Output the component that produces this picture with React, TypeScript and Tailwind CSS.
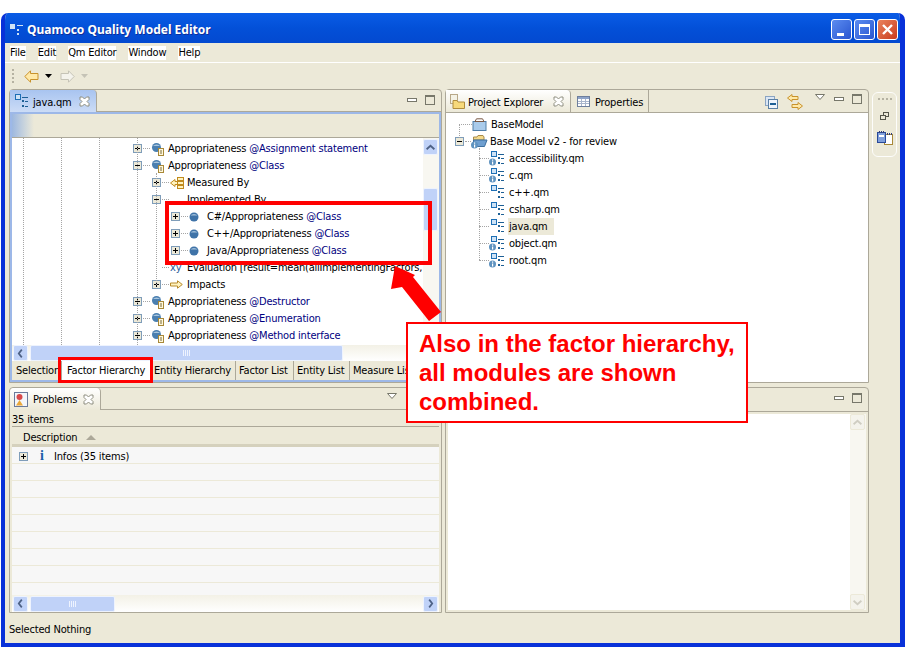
import type { ReactNode } from "react";

/* ------------------------------------------------------------------ */
/*  Icons                                                              */
/* ------------------------------------------------------------------ */

function Expander({ open }: { open?: boolean }) {
  return (
    <svg width="9" height="9" viewBox="0 0 9 9" className="shrink-0" shapeRendering="crispEdges">
      <rect x="0.5" y="0.5" width="8" height="8" fill="#ece9d8" stroke="#7f9db9" />
      <rect x="2" y="4" width="5" height="1" fill="#000" />
      {!open && <rect x="4" y="2" width="1" height="5" fill="#000" />}
    </svg>
  );
}

function FactorIcon() {
  return (
    <svg width="14" height="14" viewBox="0 0 14 14" className="shrink-0">
      <circle cx="5.5" cy="5.5" r="4.5" fill="#4a7fb0" />
      <path d="M2 4 A4 3 0 0 1 9 4 Z" fill="#a9c6de" />
      <rect x="7.5" y="6.5" width="5" height="7" fill="#fff8dc" stroke="#a88838" />
      <path d="M9 9h2M9 11h2" stroke="#7a6a3a" />
    </svg>
  );
}

function BallIcon() {
  return (
    <svg width="10" height="10" viewBox="0 0 10 10" className="shrink-0">
      <circle cx="5" cy="5" r="4.5" fill="#3f73a8" />
      <path d="M1.5 3.5 A4 3 0 0 1 8.5 3.5 Z" fill="#a4c2dc" />
    </svg>
  );
}

function MeasuredIcon() {
  return (
    <svg width="14" height="12" viewBox="0 0 14 12" className="shrink-0" fill="#fff3c0" stroke="#c08a1e">
      <path d="M0.5 6 L5 2.5 V4.5 H8 V7.5 H5 V9.5 Z" />
      <rect x="7.5" y="0.5" width="6" height="3" />
      <rect x="7.5" y="4.5" width="6" height="3" />
      <rect x="7.5" y="8.5" width="6" height="3" />
    </svg>
  );
}

function ImpactArrow() {
  return (
    <svg width="13" height="9" viewBox="0 0 13 9" className="shrink-0">
      <path d="M0.5 3 H7.5 V0.8 L12.3 4.5 L7.5 8.2 V6 H0.5 Z" fill="#fff3c0" stroke="#b88a2a" />
    </svg>
  );
}

function FileIcon({ info }: { info?: boolean }) {
  return (
    <svg width="16" height="15" viewBox="0 0 16 15" className="shrink-0" shapeRendering="crispEdges">
      <rect x="2.5" y="0.5" width="5" height="5" fill="#cfe3f6" stroke="#1d6fb5" />
      <rect x="9" y="3" width="6" height="1" fill="#1d5f95" />
      <rect x="9" y="6" width="2" height="2" fill="#1d5f95" />
      <rect x="12" y="7" width="3" height="1" fill="#1d5f95" />
      <rect x="9" y="11" width="2" height="2" fill="#1d5f95" />
      <rect x="12" y="12" width="3" height="1" fill="#1d5f95" />
      {info && (
        <g shapeRendering="auto">
          <circle cx="3.5" cy="11" r="3.5" fill="#5f93c0" />
          <rect x="3" y="8.5" width="1.2" height="1.2" fill="#fff" />
          <rect x="3" y="10.5" width="1.2" height="3" fill="#fff" />
        </g>
      )}
    </svg>
  );
}

function FolderIcon({ open }: { open?: boolean }) {
  if (open) {
    return (
      <svg width="17" height="15" viewBox="0 0 17 15" className="shrink-0">
        <path d="M2.5 3 H6 L7 1.5 H12 L13 3 V6 H2.5 Z" fill="#f4d98a" stroke="#a68a4a" />
        <path d="M2.5 6 H16 L13.5 12.5 H2.5 Z" fill="#6f9fd0" stroke="#3d6f9e" />
        <circle cx="3.5" cy="11" r="3.5" fill="#5f93c0" />
        <rect x="3" y="8.5" width="1.2" height="1.2" fill="#fff" />
        <rect x="3" y="10.5" width="1.2" height="3" fill="#fff" />
      </svg>
    );
  }
  return (
    <svg width="15" height="13" viewBox="0 0 15 13" className="shrink-0">
      <rect x="1" y="3.5" width="13" height="9" fill="#a9cbeb" stroke="#4f7ea8" />
      <path d="M3 3.5 L4.5 0.8 H10.5 L12 3.5 Z" fill="#fff" stroke="#7b5a46" />
    </svg>
  );
}

function CloseX() {
  return (
    <svg width="11" height="11" viewBox="0 0 11 11" className="shrink-0">
      <path
        d="M1 1 H3.5 L5.5 3 L7.5 1 H10 V3.5 L8 5.5 L10 7.5 V10 H7.5 L5.5 8 L3.5 10 H1 V7.5 L3 5.5 L1 3.5 Z"
        fill="#fff"
        stroke="#8e8e80"
      />
    </svg>
  );
}

function MinMax() {
  return (
    <div className="flex items-start gap-[8px]">
      <div className="mt-[3px] h-[4px] w-[10px] border border-[#77776a] bg-white" />
      <div className="h-[10px] w-[10px] border border-[#77776a] border-t-2 bg-[#ece9d8]" />
    </div>
  );
}

function ChevronMenu() {
  return (
    <svg width="10" height="6" viewBox="0 0 10 6" className="shrink-0">
      <path d="M0.5 0.5 H9.5 L5 5.5 Z" fill="#fff" stroke="#77776a" />
    </svg>
  );
}

function ScrollButton({ dir, disabled }: { dir: "left" | "right" | "up" | "down"; disabled?: boolean }) {
  const d = {
    left: "M9 3 L5.5 7.5 L9 12",
    right: "M6 3 L9.5 7.5 L6 12",
    up: "M3 9.5 L7.5 5.5 L12 9.5",
    down: "M3 5.5 L7.5 9.5 L12 5.5",
  }[dir];
  return (
    <div
      className={
        disabled
          ? "flex h-[16px] w-[15px] shrink-0 items-center justify-center rounded-[2px] border border-[#ece9d8] bg-[#f4f3ec]"
          : "flex h-[16px] w-[15px] shrink-0 items-center justify-center rounded-[2px] border border-[#eef3fe] bg-[#c0d2f8]"
      }
    >
      <svg width="15" height="15" viewBox="0 0 15 15">
        <path d={d} fill="none" stroke={disabled ? "#cfcdc2" : "#4d6185"} strokeWidth="2" />
      </svg>
    </div>
  );
}

function Grip({ horizontal }: { horizontal?: boolean }) {
  return (
    <svg width={horizontal ? 14 : 3} height={horizontal ? 3 : 15} className="shrink-0">
      {[0, 1, 2, 3].map((i) => (
        <rect
          key={i}
          x={horizontal ? i * 4 : 0}
          y={horizontal ? 0 : i * 4}
          width="2"
          height="2"
          fill="#b5b2a2"
        />
      ))}
    </svg>
  );
}

/* ------------------------------------------------------------------ */
/*  Tree rows                                                          */
/* ------------------------------------------------------------------ */

type Row = {
  indent: number;
  state?: "open" | "closed";
  icon?: ReactNode;
  iconWidth: number;
  label: string;
  suffix?: string;
  tight?: boolean;
};

const factor = <FactorIcon />;
const ball = <BallIcon />;

const rows: Row[] = [
  { indent: 121, state: "closed", icon: factor, iconWidth: 17, label: "Appropriateness ", suffix: "@Assignment statement" },
  { indent: 121, state: "open", icon: factor, iconWidth: 17, label: "Appropriateness ", suffix: "@Class" },
  { indent: 140, state: "closed", icon: <MeasuredIcon />, iconWidth: 17, label: "Measured By" },
  { indent: 140, state: "open", iconWidth: 17, label: "Implemented By" },
  { indent: 159, state: "closed", icon: ball, iconWidth: 18, label: "C#/Appropriateness ", suffix: "@Class" },
  { indent: 159, state: "closed", icon: ball, iconWidth: 18, label: "C++/Appropriateness ", suffix: "@Class" },
  { indent: 159, state: "closed", icon: ball, iconWidth: 18, label: "Java/Appropriateness ", suffix: "@Class" },
  {
    indent: 140,
    icon: <span className="text-[11px] text-[#2a5a9a]">xy</span>,
    iconWidth: 17,
    label: "Evaluation [result=mean(allImplementingFactors,",
    tight: true,
  },
  { indent: 140, state: "closed", icon: <ImpactArrow />, iconWidth: 17, label: "Impacts" },
  { indent: 121, state: "closed", icon: factor, iconWidth: 17, label: "Appropriateness ", suffix: "@Destructor" },
  { indent: 121, state: "closed", icon: factor, iconWidth: 17, label: "Appropriateness ", suffix: "@Enumeration" },
  { indent: 121, state: "closed", icon: factor, iconWidth: 17, label: "Appropriateness ", suffix: "@Method interface" },
];

function TreeRow({ row }: { row: Row }) {
  return (
    <div className="flex h-[17px] items-center whitespace-pre" style={{ paddingLeft: row.indent }}>
      <div className="flex w-[18px] shrink-0 items-center">
        {row.state ? <Expander open={row.state === "open"} /> : <div className="w-[9px]" />}
        <div className="ml-[1px] w-[7px] border-t border-dotted border-[#a5a5a5]" />
      </div>
      <div className="flex shrink-0 items-center" style={{ width: row.iconWidth }}>
        {row.icon}
      </div>
      <span className={row.tight ? "tracking-[-0.24px] text-black" : "text-black"}>{row.label}</span>
      {row.suffix && <span className="text-[#000080]">{row.suffix}</span>}
    </div>
  );
}

const files = [
  { name: "accessibility.qm", info: true },
  { name: "c.qm", info: true },
  { name: "c++.qm" },
  { name: "csharp.qm" },
  { name: "java.qm", selected: true },
  { name: "object.qm", info: true },
  { name: "root.qm", info: true },
];

const sheetTabs = ["Selection", "Factor Hierarchy", "Entity Hierarchy", "Factor List", "Entity List", "Measure List"];

const tabWidths: Record<string, string> = {
  Selection: "w-[49px]",
  "Factor Hierarchy": "w-[89px]",
  "Entity Hierarchy": "w-[85px]",
  "Factor List": "w-[58px]",
  "Entity List": "w-[56px]",
  "Measure List": "w-[72px]",
};

/* ------------------------------------------------------------------ */
/*  Page                                                               */
/* ------------------------------------------------------------------ */

export default function App() {
  return (
    <div className="relative h-[649px] w-[906px] overflow-hidden bg-white pl-[1px] pt-[13px] font-['DejaVu_Sans',sans-serif] font-stretch-condensed text-[11px] leading-none tracking-[-0.18px] text-black">
      {/* Window */}
      <div className="flex h-[634px] w-[904px] flex-col overflow-hidden rounded-t-[7px] border-y-0 border-b-[4px] border-l-[4px] border-r-[5px] border-[#0831d9] bg-[#ece9d8]">
        {/* Title bar */}
        <div className="flex h-[30px] shrink-0 items-center bg-gradient-to-b from-[#0a5ce6] via-[#0350d8] to-[#0349d0] pl-[5px] pr-[2px] pt-[3px]">
          <svg width="13" height="12" viewBox="0 0 13 12" shapeRendering="crispEdges" className="shrink-0">
            <rect x="0" y="0" width="5" height="5" fill="#cfe3f6" />
            <rect x="7" y="1" width="6" height="1" fill="#cfe3f6" />
            <rect x="7" y="5" width="2" height="2" fill="#cfe3f6" />
            <rect x="7" y="9" width="2" height="2" fill="#cfe3f6" />
          </svg>
          <span className="ml-[4px] font-['Noto_Sans',sans-serif] text-[12px] font-bold tracking-normal text-white [text-shadow:1px_1px_0_#0f2f9a]">
            Quamoco Quality Model Editor
          </span>
          <div className="ml-auto flex gap-[2px]">
            <div className="flex h-[21px] w-[21px] items-end rounded-[3px] border border-white bg-gradient-to-br from-[#5c8cf0] to-[#2a55d0] pb-[3px] pl-[5px]">
              <div className="h-[3px] w-[7px] bg-white" />
            </div>
            <div className="flex h-[21px] w-[21px] items-center justify-center rounded-[3px] border border-white bg-gradient-to-br from-[#5c8cf0] to-[#2a55d0]">
              <div className="h-[11px] w-[11px] border border-white border-t-[3px]" />
            </div>
            <div className="flex h-[21px] w-[21px] items-center justify-center rounded-[3px] border border-white bg-gradient-to-br from-[#e9825c] to-[#c8391a]">
              <svg width="13" height="13" viewBox="0 0 13 13">
                <path d="M2 2 L11 11 M11 2 L2 11" stroke="#fff" strokeWidth="2.4" />
              </svg>
            </div>
          </div>
        </div>

        {/* Menu bar */}
        <div className="flex h-[19px] shrink-0 items-center pl-[5px] text-[11px]">
          {["File", "Edit", "Qm Editor", "Window", "Help"].map((item) => (
            <span key={item} className="mr-[12px] bg-white py-[1px] leading-[12px]">
              {item}
            </span>
          ))}
        </div>
        <div className="h-[1px] shrink-0 bg-white" />

        {/* Toolbar */}
        <div className="flex h-[26px] shrink-0 items-center pl-[7px]">
          <Grip />
          <svg width="15" height="13" viewBox="0 0 15 13" className="ml-[9px] shrink-0">
            <path d="M0.8 6.5 L6.5 0.8 V3.5 H14 V9.5 H6.5 V12.2 Z" fill="#ffe9a8" stroke="#c8922c" />
          </svg>
          <svg width="7" height="4" viewBox="0 0 7 4" className="ml-[6px] shrink-0">
            <path d="M0 0 H7 L3.5 4 Z" fill="#000" />
          </svg>
          <svg width="15" height="13" viewBox="0 0 15 13" className="ml-[8px] shrink-0">
            <path d="M14.2 6.5 L8.5 0.8 V3.5 H1 V9.5 H8.5 V12.2 Z" fill="#f4f3ec" stroke="#c5c3b6" />
          </svg>
          <svg width="7" height="4" viewBox="0 0 7 4" className="ml-[6px] shrink-0">
            <path d="M0 0 H7 L3.5 4 Z" fill="#c5c3b6" />
          </svg>
        </div>

        {/* Workbench */}
        <div className="flex h-[524px] shrink-0 gap-[3px] pl-[4px]">
          {/* Left column */}
          <div className="flex w-[433px] shrink-0 flex-col gap-[4px]">
            {/* Editor */}
            <div className="flex h-[294px] flex-col rounded-t-[4px] border border-[#aca899]">
              <div className="flex h-[22px] shrink-0 items-start justify-between border-b border-[#aca899] pr-[6px]">
                <div className="flex h-[22px] w-[87px] items-center rounded-tr-[4px] border-r border-[#aca899] bg-gradient-to-b from-[#a8c4f0] to-[#ccdcf6] pl-[3px]">
                  <FileIcon />
                  <span className="ml-[4px] pt-[2px]">java.qm</span>
                  <div className="ml-auto mr-[6px]">
                    <CloseX />
                  </div>
                </div>
                <div className="pt-[5px]">
                  <MinMax />
                </div>
              </div>
              <div className="flex min-h-0 flex-1 flex-col border-x-[2px] border-b-[2px] border-[#9db8e8]">
                <div className="h-[2px] shrink-0 bg-[#9db8e8]" />
                <div className="flex h-[24px] shrink-0 border-b border-[#aca899]">
                  <div className="w-[22px] bg-gradient-to-r from-[#9db8e0] to-[#ece9d8]" />
                </div>
                <div className="relative flex h-[207px] shrink-0 bg-white">
                  <div className="absolute bottom-0 left-[11px] top-0 border-l border-dotted border-[#a5a5a5]" />
                  <div className="absolute bottom-0 left-[49px] top-0 border-l border-dotted border-[#a5a5a5]" />
                  <div className="absolute bottom-0 left-[87px] top-0 border-l border-dotted border-[#a5a5a5]" />
                  <div className="absolute bottom-0 left-[125px] top-0 border-l border-dotted border-[#a5a5a5]" />
                  <div className="absolute bottom-[60px] left-[144px] top-[35px] border-l border-dotted border-[#a5a5a5]" />
                  <div className="min-w-0 flex-1 overflow-hidden pt-[2px]">
                    {rows.map((row) => (
                      <TreeRow key={row.label + row.suffix + row.indent} row={row} />
                    ))}
                  </div>
                  <div className="flex w-[16px] shrink-0 flex-col bg-[#f8f7f1] pt-[1px]">
                    <ScrollButton dir="up" disabled={false} />
                    <div className="mt-[33px] h-[43px] w-[15px] rounded-[2px] border border-[#eef3fe] bg-[#c0d2f8]" />
                  </div>
                </div>
                <div className="flex h-[16px] shrink-0 items-center gap-[2px] bg-gradient-to-b from-[#f3f1e6] to-white pl-[1px]">
                  <ScrollButton dir="left" />
                  <div className="flex h-[16px] w-[313px] items-center justify-center rounded-[2px] border border-[#eef3fe] bg-[#c0d2f8]">
                    <svg width="8" height="6" shapeRendering="crispEdges">
                      {[0, 2, 4, 6].map((x) => (
                        <rect key={x} x={x} y="0" width="1" height="6" fill="#eef3fe" />
                      ))}
                    </svg>
                  </div>
                </div>
                <div className="flex min-h-0 flex-1 items-stretch overflow-hidden bg-[#ece9d8] pl-[1px]">
                  {sheetTabs.map((tab) => (
                    <div
                      key={tab}
                      className={`flex shrink-0 items-center whitespace-nowrap pl-[3px] ${tabWidths[tab]} ${
                        tab === "Factor Hierarchy" ? "bg-white pl-[5px]" : "border-r border-[#aca899]"
                      }`}
                    >
                      {tab}
                    </div>
                  ))}
                </div>
              </div>
            </div>

            {/* Problems */}
            <div className="flex h-[226px] flex-col rounded-t-[4px] border border-[#aca899]">
              <div className="flex h-[22px] shrink-0 items-start justify-between border-b border-[#aca899] pr-[44px]">
                <div className="flex h-[22px] w-[91px] items-center rounded-t-[4px] border-r border-[#aca899] bg-gradient-to-b from-white to-[#ece9d8] pl-[4px]">
                  <svg width="14" height="15" viewBox="0 0 14 15" className="shrink-0">
                    <rect x="0.5" y="0.5" width="13" height="14" fill="#f4f6fa" stroke="#6a7a9a" />
                    <circle cx="5.5" cy="5" r="3" fill="#d84a4a" />
                    <path d="M5.5 8 L9 13.5 H2 Z" fill="#eba83a" />
                  </svg>
                  <span className="ml-[5px]">Problems</span>
                  <div className="ml-auto mr-[6px]">
                    <CloseX />
                  </div>
                </div>
                <div className="pt-[5px]">
                  <ChevronMenu />
                </div>
              </div>
              <div className="flex h-[16px] shrink-0 items-center pl-[2px] pt-[2px]">35 items</div>
              <div className="mx-[2px] flex min-h-0 flex-1 flex-col border-t border-[#aca899]">
                <div className="flex h-[17px] shrink-0 items-center pl-[11px] pt-[4px]">
                  Description
                  <svg width="10" height="5" viewBox="0 0 10 5" className="ml-[9px]">
                    <path d="M0 5 L5 0 L10 5 Z" fill="#aca899" />
                  </svg>
                </div>
                <div className="h-[3px] shrink-0 bg-[#d5d1bd]" />
                <div className="flex min-h-0 flex-1 flex-col bg-[#f7f7f7]">
                  <div className="flex h-[17px] shrink-0 items-center border-b border-[#ece9d8] pl-[7px] pt-[2px]">
                    <Expander />
                    <span className="ml-[12px] w-[10px] font-['Liberation_Serif',serif] text-[14px] font-bold text-[#1d5fa8]">
                      i
                    </span>
                    <span className="ml-[4px]">Infos (35 items)</span>
                  </div>
                  {[0, 1, 2, 3, 4, 5, 6].map((i) => (
                    <div key={i} className="h-[17px] shrink-0 border-b border-[#ece9d8]" />
                  ))}
                </div>
                <div className="flex h-[17px] shrink-0 items-center bg-gradient-to-b from-[#f3f1e6] to-white pl-[1px]">
                  <ScrollButton dir="left" />
                  <div className="ml-[2px] flex h-[16px] w-[85px] items-center justify-center rounded-[2px] border border-[#eef3fe] bg-[#c0d2f8]">
                    <svg width="8" height="6" shapeRendering="crispEdges">
                      {[0, 2, 4, 6].map((x) => (
                        <rect key={x} x={x} y="0" width="1" height="6" fill="#eef3fe" />
                      ))}
                    </svg>
                  </div>
                  <div className="ml-auto mr-[1px]">
                    <ScrollButton dir="right" />
                  </div>
                </div>
              </div>
            </div>
          </div>

          {/* Right column */}
          <div className="flex w-[424px] shrink-0 flex-col gap-[4px]">
            <div className="flex h-[294px] flex-col rounded-t-[4px] border border-[#aca899]">
              <div className="flex h-[23px] shrink-0 items-start border-b border-[#aca899] pr-[6px]">
                <div className="flex h-[22px] w-[125px] items-center rounded-tr-[4px] border-r border-[#aca899] bg-gradient-to-b from-white to-[#ece9d8] pl-[4px]">
                  <svg width="15" height="15" viewBox="0 0 15 15" className="shrink-0">
                    <rect x="0.5" y="0.5" width="7" height="9" fill="#f4f2e6" stroke="#b8a888" />
                    <path d="M3 6.5 H7 L8 8 H14.5 V14.5 H3 Z" fill="#f7d97a" stroke="#b08c3c" />
                  </svg>
                  <span className="ml-[3px] pt-[2px]">Project Explorer</span>
                  <div className="ml-auto mr-[6px]">
                    <CloseX />
                  </div>
                </div>
                <div className="flex h-[22px] w-[78px] items-center border-r border-[#aca899] pl-[6px]">
                  <svg width="13" height="11" viewBox="0 0 13 11" shapeRendering="crispEdges" className="shrink-0">
                    <rect x="0.5" y="0.5" width="12" height="10" fill="#fff" stroke="#6e7f9c" />
                    <rect x="1" y="1" width="11" height="2" fill="#8fa4c8" />
                    <path d="M1 5.5H12M1 7.5H12M4.5 3V10M8.5 3V10" stroke="#a8b5cc" />
                  </svg>
                  <span className="ml-[5px] pt-[2px]">Properties</span>
                </div>
                <div className="ml-auto flex items-start gap-[9px] pt-[4px]">
                  <svg width="13" height="13" viewBox="0 0 13 13" shapeRendering="crispEdges" className="mt-[2px]">
                    <rect x="0.5" y="0.5" width="9" height="9" fill="#dbe6f4" stroke="#8aa4c2" />
                    <rect x="3.5" y="3.5" width="9" height="9" fill="#eef4fb" stroke="#5a7fa4" />
                    <rect x="5" y="7" width="6" height="2" fill="#1d5f95" />
                  </svg>
                  <svg width="16" height="16" viewBox="0 0 16 16" className="mr-[3px]">
                    <path d="M0.5 4 L5 0.5 V2.5 H11 V5.5 H5 V7.5 Z" fill="#ffe9a8" stroke="#c8922c" />
                    <path d="M15.5 12 L11 8.5 V10.5 H5 V13.5 H11 V15.5 Z" fill="#ffe9a8" stroke="#c8922c" />
                  </svg>
                  <ChevronMenu />
                  <MinMax />
                </div>
              </div>
              <div className="relative min-h-0 flex-1 bg-white pl-[9px] pt-[3px]">
                <div className="absolute left-[13px] top-[11px] h-[14px] border-l border-dotted border-[#a5a5a5]" />
                <div className="absolute left-[33px] top-[35px] h-[112px] border-l border-dotted border-[#a5a5a5]" />
                <div className="flex h-[17px] items-center pl-[4px]">
                  <div className="w-[13px] border-t border-dotted border-[#a5a5a5]" />
                  <FolderIcon />
                  <span className="ml-[4px]">BaseModel</span>
                </div>
                <div className="flex h-[17px] items-center">
                  <Expander open />
                  <div className="ml-[1px] w-[6px] border-t border-dotted border-[#a5a5a5]" />
                  <FolderIcon open />
                  <span className="ml-[2px]">Base Model v2 - for review</span>
                </div>
                {files.map((file) => (
                  <div key={file.name} className="flex h-[17px] items-center pl-[24px]">
                    <div className="w-[10px] border-t border-dotted border-[#a5a5a5]" />
                    <FileIcon info={file.info} />
                    <span
                      className={
                        file.selected
                          ? "ml-[3px] h-[17px] w-[46px] bg-[#ece9d8] pl-[1px] leading-[17px]"
                          : "ml-[4px]"
                      }
                    >
                      {file.name}
                    </span>
                  </div>
                ))}
              </div>
            </div>

            <div className="flex h-[226px] flex-col rounded-t-[4px] border border-[#aca899]">
              <div className="flex h-[24px] shrink-0 items-start justify-end border-b border-[#aca899] pr-[6px] pt-[5px]">
                <MinMax />
              </div>
              <div className="m-[2px] flex min-h-0 flex-1 justify-end bg-white">
                <div className="flex w-[16px] flex-col justify-between bg-[#f8f7f1]">
                  <ScrollButton dir="up" disabled />
                  <ScrollButton dir="down" disabled />
                </div>
              </div>
            </div>
          </div>

          {/* Trim */}
          <div className="mt-[3px] flex h-[65px] w-[25px] shrink-0 flex-col items-center rounded-[6px] border border-[#fdfdfb] pt-[5px]">
            <Grip horizontal />
            <svg width="9" height="8" viewBox="0 0 9 8" shapeRendering="crispEdges" className="mt-[11px]">
              <rect x="3.5" y="0.5" width="5" height="4" fill="#ece9d8" stroke="#55554a" />
              <rect x="0.5" y="3.5" width="5" height="4" fill="#ece9d8" stroke="#55554a" />
            </svg>
            <svg width="16" height="14" viewBox="0 0 16 14" shapeRendering="crispEdges" className="mt-[11px]">
              <rect x="7.5" y="3.5" width="8" height="10" fill="#fff" stroke="#a88838" />
              <rect x="0.5" y="1.5" width="8" height="10" fill="#7f9fdc" stroke="#2a4a98" />
              <rect x="2" y="4" width="5" height="2" fill="#fff" />
              <path d="M2 0v2M4 0v2M6 0v2M10 2v2M12 2v2M14 2v2" stroke="#33407a" />
            </svg>
          </div>
        </div>

        {/* Status line */}
        <div className="flex min-h-0 flex-1 items-center pl-[4px] pt-[2px]">Selected Nothing</div>
      </div>

      {/* Annotations painted on top of the screenshot */}
      <div className="absolute left-[165px] top-[201px] h-[64px] w-[267px] border-[4px] border-[#ff0000]" />
      <div className="absolute left-[58px] top-[357px] h-[26px] w-[95px] border-[3px] border-[#ff0000]" />
      <svg className="absolute left-[385px] top-[260px]" width="60" height="66" viewBox="0 0 60 66">
        <path d="M10 6 L30 15 L28 17 L56 52 L44 61 L17 27 L6 29 Z" fill="#ff0000" />
      </svg>
      <div className="absolute left-[406px] top-[322px] flex h-[101px] w-[342px] flex-col justify-center border-[2px] border-[#ff0000] bg-white pl-[11px] font-['Liberation_Sans',sans-serif] text-[24px] font-bold font-stretch-normal leading-[29px] tracking-normal text-[#ff0000]">
        <div className="whitespace-nowrap">Also in the factor hierarchy,</div>
        <div className="whitespace-nowrap">all modules are shown</div>
        <div className="whitespace-nowrap">combined.</div>
      </div>
    </div>
  );
}
